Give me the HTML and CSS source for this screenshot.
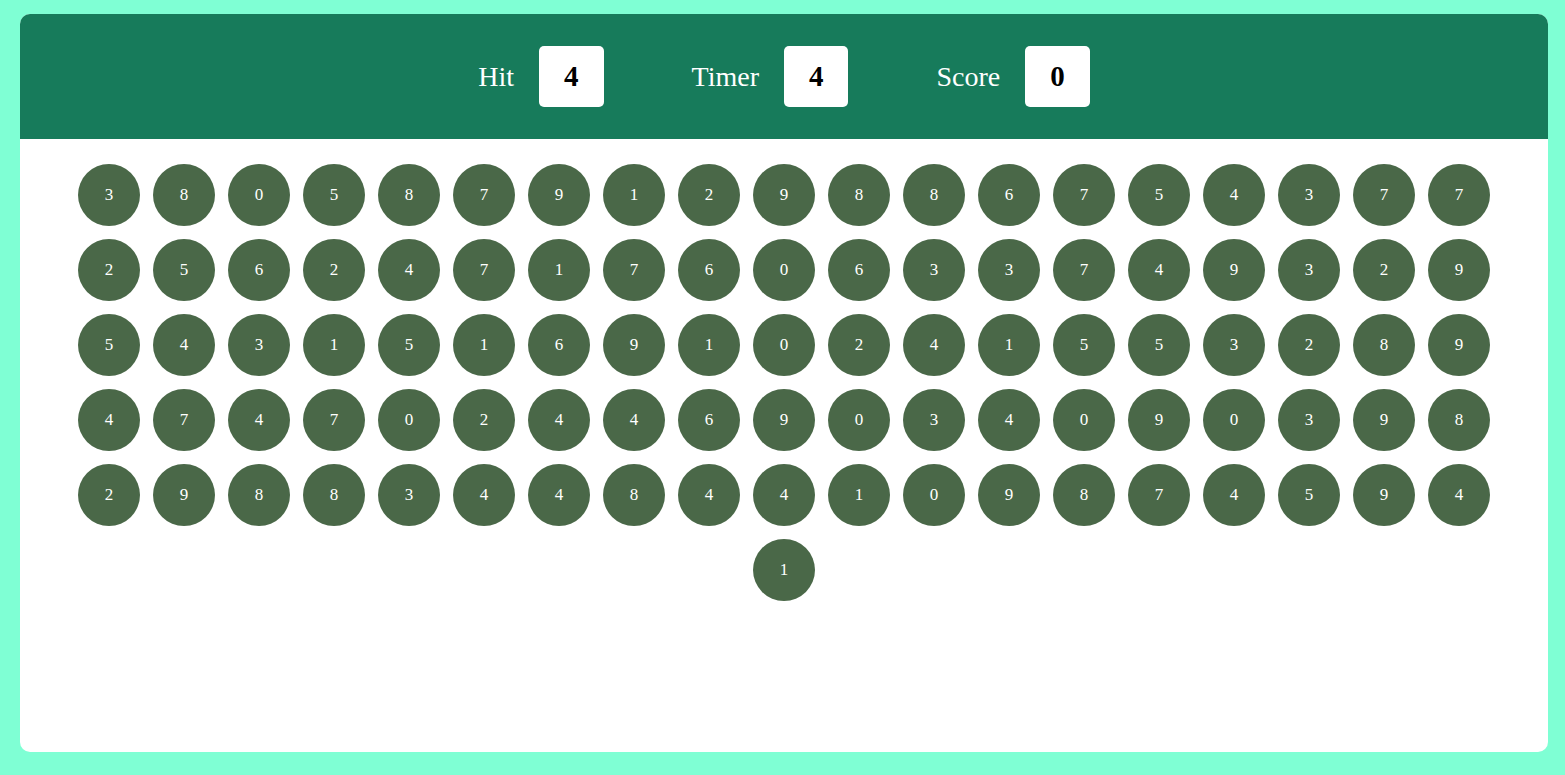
FILE: index.html
```html
<!DOCTYPE html>
<html lang="en">
<head>
  <meta charset="UTF-8">
  <meta name="viewport" content="width=device-width, initial-scale=1.0">
  <title>Bubble Game</title>
  <link rel="stylesheet" href="styles.css">
</head>
<body>

  <div id="main">
    <div id="ptop">
      <div class="elem">
        <h2>Hit</h2>
        <div class="box" id="hitval">4</div>
      </div>
      <div class="elem">
        <h2>Timer</h2>
        <div class="box" id="timerval">4</div>
      </div>
      <div class="elem">
        <h2>Score</h2>
        <div class="box" id="scoreval">0</div>
      </div>
    </div>
    <div id="pbtm"></div>
  </div>

  <script>
    // fixed board so the picture is always the same
    var nums = "3805879129886754377" +
               "2562471760633749329" +
               "5431516910241553289" +
               "4747024469034090398" +
               "2988344844109874594" +
               "1";

    function makeBubble() {
      var clutter = "";
      for (var i = 0; i < nums.length; i++) {
        clutter += `<div class="bubble">${nums[i]}</div>`;
      }
      document.getElementById("pbtm").innerHTML = clutter;
    }

    makeBubble();
  </script>
</body>
</html>
```

FILE: styles.css
```css
* {
  margin: 0;
  padding: 0;
  box-sizing: border-box;
}

html, body {
  width: 100%;
  height: 100%;
}

body {
  font-family: "Liberation Serif", "Times New Roman", serif;
  background-color: aquamarine;
  padding: 14px 17px 23px 20px;
}

#main {
  width: 100%;
  height: 100%;
  background-color: #fff;
  border-radius: 10px;
  overflow: hidden;
}

#ptop {
  height: 125px;
  background-color: #177b5b;
  color: #fff;
  display: flex;
  justify-content: center;
  align-items: center;
  gap: 88px;
}

.elem {
  display: flex;
  align-items: center;
  gap: 25px;
}

.elem h2 {
  font-weight: 400;
  font-size: 28px;
}

.box {
  background-color: #fff;
  color: #000;
  font-size: 29px;
  font-weight: 700;
  line-height: 33px;
  padding: 14px 25px;
  border-radius: 5px;
}

#pbtm {
  display: flex;
  flex-wrap: wrap;
  justify-content: center;
  gap: 13px;
  padding: 25px 30px;
}

.bubble {
  width: 62px;
  height: 62px;
  border-radius: 50%;
  background-color: #4a6848;
  color: #fff;
  font-size: 17px;
  display: flex;
  justify-content: center;
  align-items: center;
}
```
